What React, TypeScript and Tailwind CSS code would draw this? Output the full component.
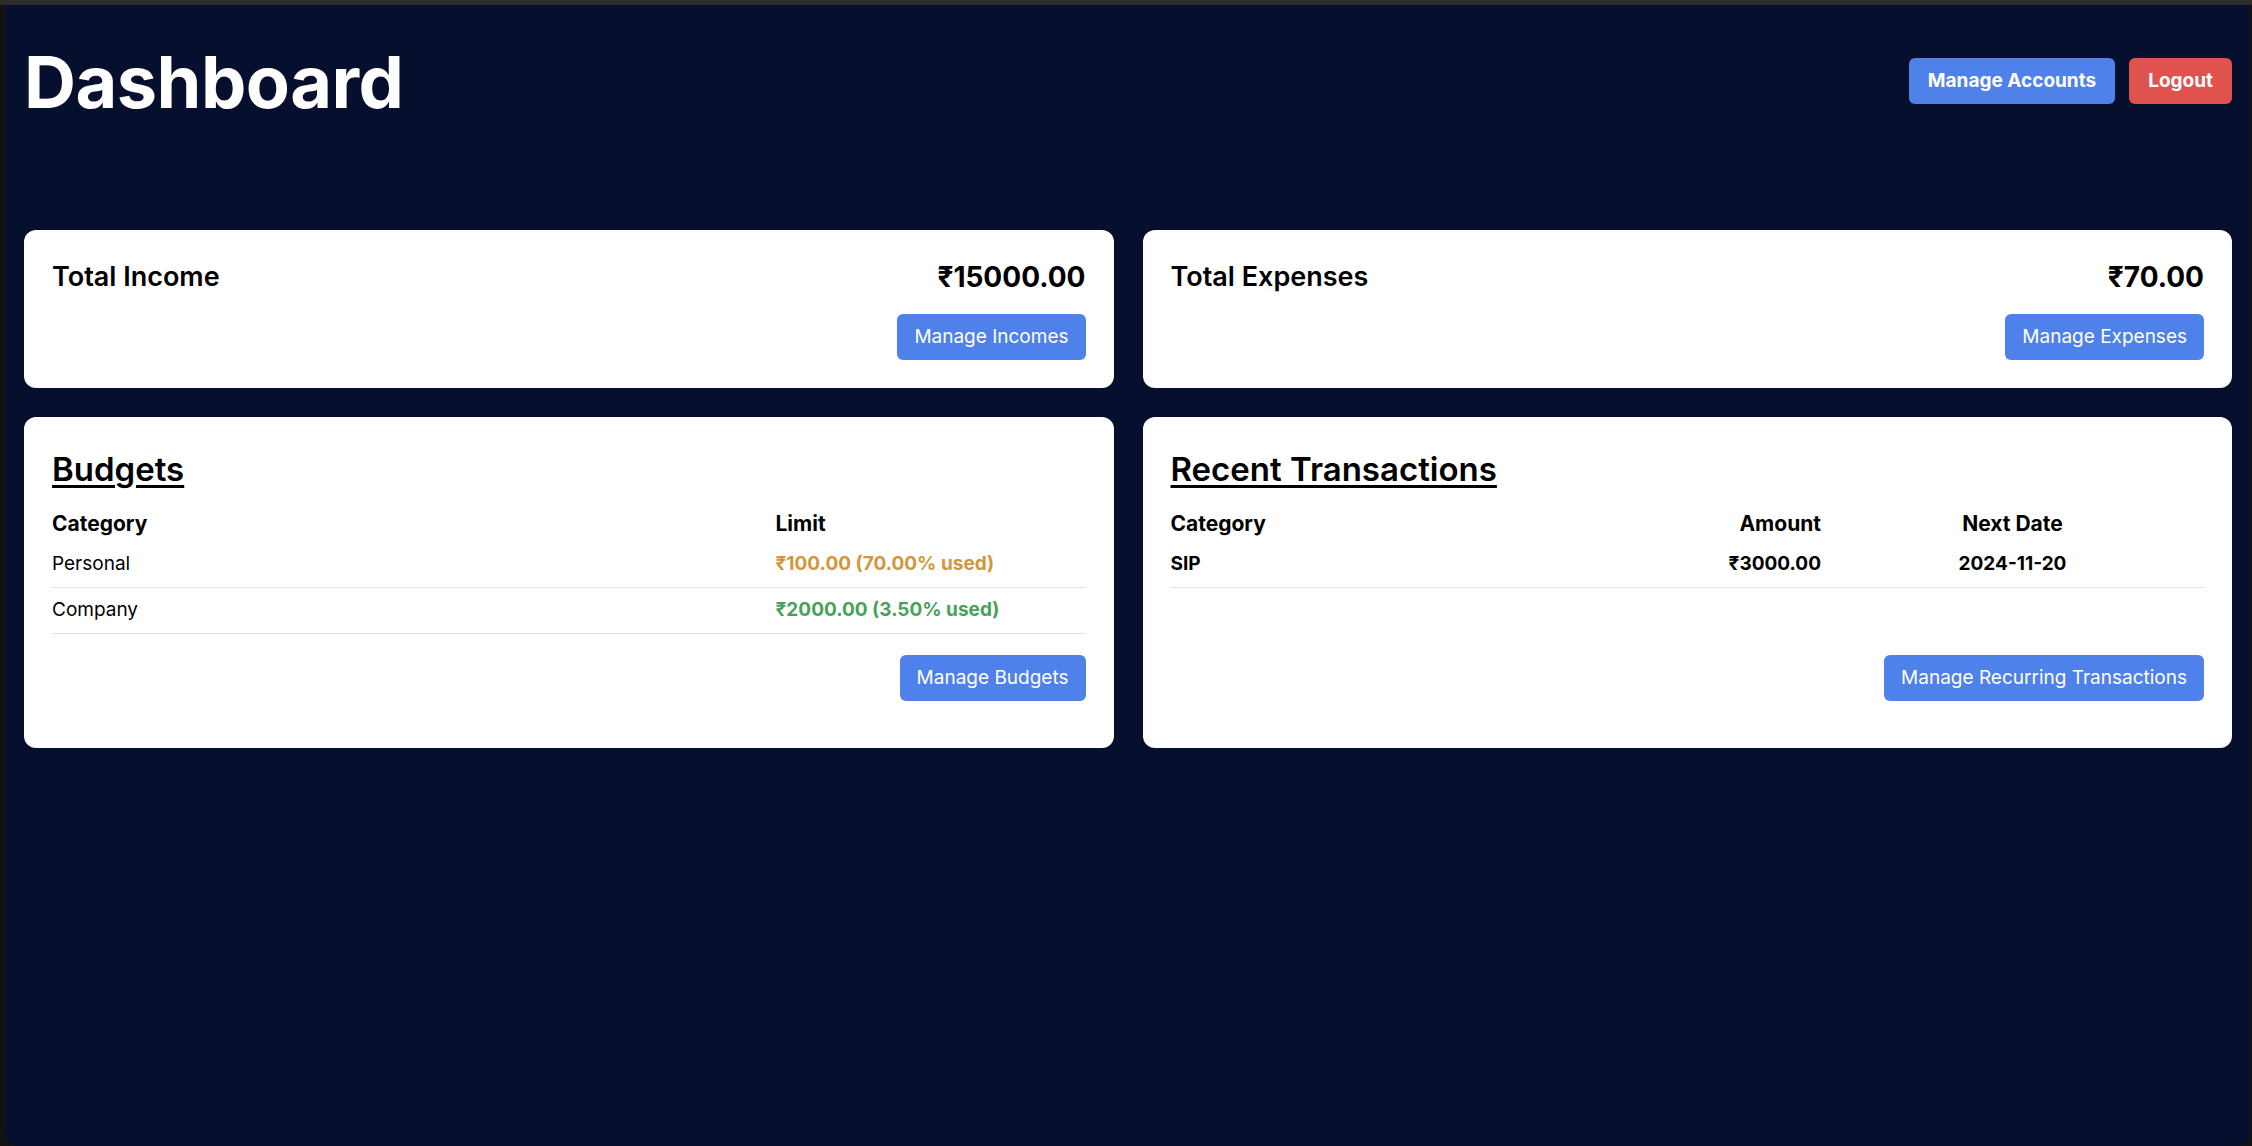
const budgets = [
  { id: 1, category: "Personal", limit: "₹100.00 (70.00% used)", tone: "text-[#d3963a]" },
  { id: 2, category: "Company", limit: "₹2000.00 (3.50% used)", tone: "text-[#47a25a]" },
];

const transactions = [{ id: 1, category: "SIP", amount: "₹3000.00", nextDate: "2024-11-20" }];

const BlueButton = ({ label }: { label: string }) => (
  <button className="h-[46px] px-[17px] rounded-[6px] bg-[#4f81ea] text-white text-[19px] leading-[24px]">
    {label}
  </button>
);

const SummaryCard = ({ title, amount, action }: { title: string; amount: string; action: string }) => (
  <div className="bg-white rounded-[12px] p-[28px]">
    <div className="flex items-center justify-between h-[36px] mt-[1px]">
      <h3 className="text-[27px] font-semibold text-black">{title}</h3>
      <span className="text-[28px] font-bold text-black">{amount}</span>
    </div>
    <div className="flex justify-end mt-[19px]">
      <BlueButton label={action} />
    </div>
  </div>
);

const App = () => {
  return (
    <div className="h-[1146px] flex flex-col bg-[#121212] font-['Inter',sans-serif] overflow-hidden">
      {/* window chrome */}
      <div className="h-[5px] bg-[#2c2c2c]" />
      <div className="flex-1 flex pl-[5px] pr-[3px]">
        <div className="flex-1 bg-[#060f2e] rounded-b-[14px] px-[19px] pr-[17px] pt-[41px]">

          {/* ── HEADER ── */}
          <div className="flex items-center justify-between">
            <h1 className="text-[72px] leading-none font-bold text-white tracking-[-0.5px]">Dashboard</h1>
            <div className="flex items-center gap-[14px] -mt-[2px]">
              <button className="h-[46px] px-[19px] rounded-[6px] bg-[#4f81ea] text-white text-[19px] font-bold">
                Manage Accounts
              </button>
              <button className="h-[46px] px-[19px] rounded-[6px] bg-[#e0524e] text-white text-[19px] font-bold">
                Logout
              </button>
            </div>
          </div>

          {/* ── SUMMARY ── */}
          <div className="grid grid-cols-2 gap-[29px] mt-[112px]">
            <SummaryCard title="Total Income" amount="₹15000.00" action="Manage Incomes" />
            <SummaryCard title="Total Expenses" amount="₹70.00" action="Manage Expenses" />
          </div>

          {/* ── DETAILS ── */}
          <div className="grid grid-cols-2 gap-[29px] mt-[29px]">
            <div className="bg-white rounded-[12px] px-[28px] pt-[32px] pb-[47px] flex flex-col">
              <h2 className="text-[33px] leading-[40px] font-semibold underline underline-offset-[4px] decoration-[3px] text-black">
                Budgets
              </h2>
              <div className="grid grid-cols-[1fr_310px] mt-[17px] h-[36px] items-center text-[21px] font-bold text-black">
                <span>Category</span>
                <span>Limit</span>
              </div>
              {budgets.map((b) => (
                <div
                  key={b.id}
                  className="grid grid-cols-[1fr_310px] pt-[10px] pb-[11px] border-b border-[#e3e3e3] text-[19px] leading-[24px]"
                >
                  <span className="text-black">{b.category}</span>
                  <span className={`font-bold ${b.tone}`}>{b.limit}</span>
                </div>
              ))}
              <div className="flex justify-end mt-[21px]">
                <BlueButton label="Manage Budgets" />
              </div>
            </div>

            <div className="bg-white rounded-[12px] px-[28px] pt-[32px] pb-[47px] flex flex-col">
              <h2 className="text-[33px] leading-[40px] font-semibold underline underline-offset-[4px] decoration-[3px] text-black">
                Recent Transactions
              </h2>
              <div className="grid grid-cols-[1fr_200px_383px] mt-[17px] h-[36px] items-center text-[21px] font-bold text-black">
                <span>Category</span>
                <span className="text-right">Amount</span>
                <span className="text-center">Next Date</span>
              </div>
              {transactions.map((t) => (
                <div
                  key={t.id}
                  className="grid grid-cols-[1fr_200px_383px] pt-[10px] pb-[11px] border-b border-[#e3e3e3] text-[19px] leading-[24px] font-bold text-black"
                >
                  <span>{t.category}</span>
                  <span className="text-right">{t.amount}</span>
                  <span className="text-center">{t.nextDate}</span>
                </div>
              ))}
              <div className="flex justify-end mt-auto">
                <BlueButton label="Manage Recurring Transactions" />
              </div>
            </div>
          </div>

        </div>
      </div>
    </div>
  );
};

export default App;
